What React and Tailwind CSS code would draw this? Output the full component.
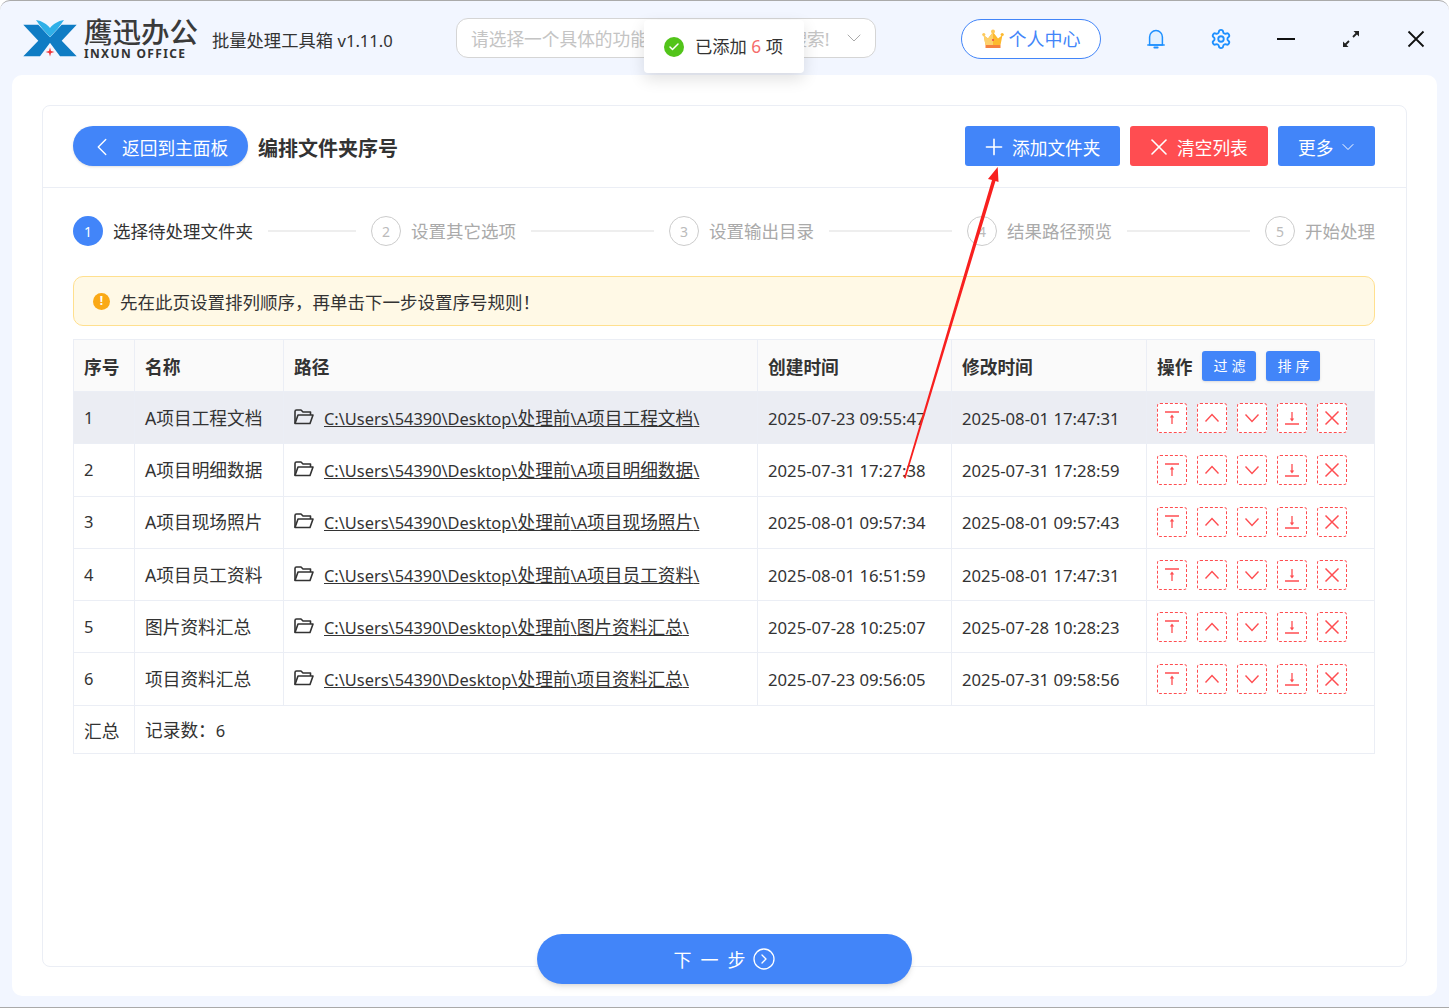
import React from 'react'
import { ChevronLeft, ChevronDown, Plus, X, Settings, CircleChevronRight, Check } from 'lucide-react'

const rows = [
  { id: 1, name: 'A项目工程文档', path: 'C:\\Users\\54390\\Desktop\\处理前\\A项目工程文档\\', created: '2025-07-23 09:55:47', modified: '2025-08-01 17:47:31' },
  { id: 2, name: 'A项目明细数据', path: 'C:\\Users\\54390\\Desktop\\处理前\\A项目明细数据\\', created: '2025-07-31 17:27:38', modified: '2025-07-31 17:28:59' },
  { id: 3, name: 'A项目现场照片', path: 'C:\\Users\\54390\\Desktop\\处理前\\A项目现场照片\\', created: '2025-08-01 09:57:34', modified: '2025-08-01 09:57:43' },
  { id: 4, name: 'A项目员工资料', path: 'C:\\Users\\54390\\Desktop\\处理前\\A项目员工资料\\', created: '2025-08-01 16:51:59', modified: '2025-08-01 17:47:31' },
  { id: 5, name: '图片资料汇总', path: 'C:\\Users\\54390\\Desktop\\处理前\\图片资料汇总\\', created: '2025-07-28 10:25:07', modified: '2025-07-28 10:28:23' },
  { id: 6, name: '项目资料汇总', path: 'C:\\Users\\54390\\Desktop\\处理前\\项目资料汇总\\', created: '2025-07-23 09:56:05', modified: '2025-07-31 09:58:56' },
]

const steps = ['选择待处理文件夹', '设置其它选项', '设置输出目录', '结果路径预览', '开始处理']

const Logo = () => (
  <svg width="54" height="38" viewBox="0 0 54 38">
    <path d="M0.3 4.7H15.3L29.3 19.7L17 36.3H0.3L15.3 20.7Z" fill="#0f7cc4" />
    <path d="M53.7 4.7H38.7L24.7 19.7L37 36.3H53.7L38.7 20.7Z" fill="#0f7cc4" />
    <path d="M13 0C19 1 24 4 27 8C30 4 35 1 41 0C37 6 32 12 27 17C22 12 17 6 13 0Z" fill="#2fb0e8" />
    <path d="M27 27.5L28 31L31.5 32L28 33L27 36.5L26 33L22.5 32L26 31Z" fill="#f0353b" />
  </svg>
)

const Crown = () => (
  <svg width="22" height="20" viewBox="0 0 22 20">
    <path d="M1.5 6L6 9.5L11 3L16 9.5L20.5 6L18.5 16H3.5Z" fill="#fdb92e" />
    <path d="M1.5 6L6 9.5L11 3V16H3.5Z" fill="#fdd06c" />
    <circle cx="1.8" cy="5.5" r="1.6" fill="#fdc95a" />
    <circle cx="11" cy="2.4" r="2" fill="#fdc95a" />
    <circle cx="20.2" cy="5.5" r="1.6" fill="#fdb92e" />
    <rect x="3.5" y="16" width="15" height="3" fill="#f5803e" />
    <circle cx="11" cy="11" r="1" fill="#e8434b" />
  </svg>
)

const Bell = () => (
  <svg width="18" height="20" viewBox="0 0 18 20" fill="#e3f1ff" stroke="#1e90ff" strokeWidth="1.5">
    <path d="M2.6 16V8C2.6 4.4 5.4 1.6 9 1.6S15.4 4.4 15.4 8V16Z" strokeLinejoin="round" />
    <path d="M0.8 16H17.2" strokeLinecap="round" />
    <path d="M7.4 18.4H10.6" strokeLinecap="round" strokeWidth="2" />
  </svg>
)

const ExpandIcon = () => (
  <svg width="18" height="18" viewBox="0 0 18 18" fill="#222" stroke="#222" strokeWidth="1.8">
    <path d="M3 15L7 11M11 7L15 3" />
    <path d="M1 17V11.5L6.5 17Z" stroke="none" />
    <path d="M17 1V6.5L11.5 1Z" stroke="none" />
  </svg>
)

const CloseIcon = () => (
  <svg width="18" height="18" viewBox="0 0 18 18" fill="none" stroke="#111" strokeWidth="1.8">
    <path d="M1.5 1.5L16.5 16.5M16.5 1.5L1.5 16.5" />
  </svg>
)

const FolderIcon = () => (
  <svg width="20" height="16" viewBox="0 0 20 16" fill="none" stroke="#333" strokeWidth="1.6" className="shrink-0 -mt-[3px]">
    <path d="M1 14.5V2.5C1 1.7 1.7 1 2.5 1H7L9 3H16.5V6" strokeLinejoin="round" />
    <path d="M1 14.5L4 6H19L16 14.5Z" strokeLinejoin="round" />
  </svg>
)

const MoveTop = () => (
  <svg width="16" height="16" viewBox="0 0 16 16" fill="none" stroke="#ff4d51" strokeWidth="1.3">
    <path d="M1 2H15M8 14V6" />
    <path d="M8 4.6L10.2 7.4H5.8Z" fill="#ff4d51" stroke="none" />
  </svg>
)

const MoveBottom = () => (
  <svg width="16" height="16" viewBox="0 0 16 16" fill="none" stroke="#ff4d51" strokeWidth="1.3">
    <path d="M1 14H15M8 2V10" />
    <path d="M8 11.4L10.2 8.6H5.8Z" fill="#ff4d51" stroke="none" />
  </svg>
)

const MoveUp = () => (
  <svg width="16" height="16" viewBox="0 0 16 16" fill="none" stroke="#ff4d51" strokeWidth="1.4">
    <path d="M1.5 11.5L8 4.5L14.5 11.5" />
  </svg>
)

const MoveDown = () => (
  <svg width="16" height="16" viewBox="0 0 16 16" fill="none" stroke="#ff4d51" strokeWidth="1.4">
    <path d="M1.5 4.5L8 11.5L14.5 4.5" />
  </svg>
)

const Remove = () => (
  <svg width="16" height="16" viewBox="0 0 16 16" fill="none" stroke="#ff4d51" strokeWidth="1.5">
    <path d="M1.5 1.5L14.5 14.5M14.5 1.5L1.5 14.5" />
  </svg>
)

const ActionButton = ({ children }) => (
  <button className="w-[30px] h-[30px] flex items-center justify-center bg-white border border-dashed border-[#ff4d51] rounded-[3px]">
    {children}
  </button>
)

// latin parts of a path run narrower than the CJK parts in the original
const PathText = ({ text }) => (
  <span className="underline whitespace-nowrap">
    {text.split(/([\u4e00-\u9fff]+)/).map((part, i) => (
      <span key={i} className={i % 2 ? 'text-[17.7px]' : 'text-[16.4px]'}>{part}</span>
    ))}
  </span>
)

const Arrow = () => (
  <svg className="absolute left-0 top-0 pointer-events-none" width="1449" height="1008" viewBox="0 0 1449 1008">
    <path d="M904 478L905.6 478.5L995.5 181L998.5 182L997.7 167L988 179L992 180Z" fill="#f8201f" />
  </svg>
)

const App = () => {
  return (
    <div className="relative w-[1449px] h-[1008px] overflow-hidden bg-white text-[#333] text-[17.7px] font-['Noto_Sans','Noto_Sans_CJK_SC',sans-serif]">
      <div className="h-full flex flex-col bg-[#f2f6ff] rounded-t-[10px] border-t border-b border-[#aaaaaa]">
        <header className="h-[74px] shrink-0 flex items-center">
          <div className="ml-[23px] w-[54px] mt-[1px]">
            <Logo />
          </div>
          <div className="ml-[7px] w-[120px] flex flex-col">
            <span className="text-[28.5px] leading-[30px] font-medium text-[#3a3a3a] whitespace-nowrap">鹰迅办公</span>
            <span className="text-[12px] leading-[13px] font-bold tracking-[1.35px] text-[#333] whitespace-nowrap">INXUN OFFICE</span>
          </div>
          <span className="ml-[8px] w-[244px] whitespace-nowrap text-[17.3px] mt-[5px]">批量处理工具箱 <span className="text-[16.6px]">v1.11.0</span></span>
          <div className="w-[420px] h-[40px] -mt-[1px] bg-white border border-[#d5d5d5] rounded-[12px] flex items-center justify-between pl-[14px] pr-[9px] text-[#c4c4c4]">
            <span className="whitespace-nowrap pt-[4px]">请选择一个具体的功能，支持输入关键字搜索!</span>
            <ChevronDown size={24} strokeWidth={1} color="#aaa" />
          </div>
          <button className="ml-[85px] mt-[1px] w-[140px] h-[40px] rounded-full bg-white border border-[#4285f9] flex items-center justify-center gap-[5px] text-[#4285f9]">
            <Crown />
            <span className="text-[18px] pt-[2px]">个人中心</span>
          </button>
          <div className="ml-[46px] mt-[1px] w-[18px]">
            <Bell />
          </div>
          <div className="ml-[45px] mt-[1px]">
            <Settings size={22} color="#1e90ff" strokeWidth={2} />
          </div>
          <div className="ml-[45px] mt-[1px] w-[18px] h-[2px] bg-[#111]" />
          <div className="ml-[47px] mt-[1px]">
            <ExpandIcon />
          </div>
          <div className="ml-[47px] mt-[1px]">
            <CloseIcon />
          </div>
        </header>

        <main className="ml-[12px] w-[1425px] h-[921px] bg-white rounded-[10px] pt-[30px] px-[30px] shrink-0">
          <div className="h-[862px] border border-[#ebeef5] rounded-[8px]">
            <div className="h-[82px] border-b border-[#ebeef5] flex items-center pl-[30px] pr-[31px] pb-[2px]">
              <button className="w-[175px] h-[40px] rounded-full bg-[#4285f9] text-white flex items-center pl-[14px] gap-[5px] shadow-sm">
                <ChevronLeft size={30} strokeWidth={1.1} className="mt-[2px]" />
                <span className="whitespace-nowrap pt-[6px]">返回到主面板</span>
              </button>
              <h1 className="ml-[10px] pt-[6px] text-[20px] font-bold text-[#333] whitespace-nowrap">编排文件夹序号</h1>
              <div className="ml-auto flex gap-[10px]">
                <button className="w-[155px] h-[40px] rounded-[3px] bg-[#4285f9] text-white flex items-center pl-[16px] gap-[5px]">
                  <Plus size={26} strokeWidth={1.5} className="mt-[2px]" />
                  <span className="pt-[6px]">添加文件夹</span>
                </button>
                <button className="w-[138px] h-[40px] rounded-[3px] bg-[#ff4d51] text-white flex items-center pl-[15px] gap-[4px]">
                  <X size={28} strokeWidth={1.4} className="mt-[2px]" />
                  <span className="pt-[6px]">清空列表</span>
                </button>
                <button className="w-[97px] h-[40px] rounded-[3px] bg-[#4285f9] text-white flex items-center pl-[20px] gap-[5px]">
                  <span className="pt-[6px]">更多</span>
                  <ChevronDown size={20} strokeWidth={1.2} className="mt-[2px]" />
                </button>
              </div>
            </div>

            <div className="pl-[30px] pr-[31px]">
              <div className="mt-[28px] flex items-center">
                {steps.map((step, i) => (
                  <div key={step} className={`flex items-center ${i < 4 ? 'w-[298px] shrink-0' : 'shrink-0'}`}>
                    {i === 0 ? (
                      <span className="w-[30px] h-[30px] rounded-full bg-[#4285f9] text-white text-[14px] flex items-center justify-center shrink-0">{i + 1}</span>
                    ) : (
                      <span className="w-[30px] h-[30px] rounded-full border border-[#cccccc] text-[#bbbbbb] text-[14px] flex items-center justify-center shrink-0">{i + 1}</span>
                    )}
                    <span className={`ml-[10px] whitespace-nowrap text-[17.5px] ${i === 0 ? 'text-[#333]' : 'text-[#aaaaaa]'}`}>{step}</span>
                    {i < 4 && <span className="flex-1 h-[2px] bg-[#eeeeee] ml-[15px] mr-[15px]" />}
                  </div>
                ))}
              </div>

              <div className="mt-[30px] h-[50px] bg-[#fff9e6] border border-[#ffe08f] rounded-[10px] flex items-center pl-[19px]">
                <span className="w-[17px] h-[17px] rounded-full bg-[#faa916] text-white text-[12px] font-bold flex items-center justify-center">!</span>
                <span className="ml-[10px] pt-[2px] text-[17.5px] whitespace-nowrap">先在此页设置排列顺序，再单击下一步设置序号规则！</span>
              </div>

              <table className="mt-[13px] w-[1301px] table-fixed border-collapse text-left">
                <thead>
                  <tr className="h-[52px] bg-[#fafafa]">
                    <th className="w-[61px] border border-[#ebeef5] pl-[10px] pt-[3px] font-bold">序号</th>
                    <th className="w-[149px] border border-[#ebeef5] pl-[10px] pt-[3px] font-bold">名称</th>
                    <th className="w-[474px] border border-[#ebeef5] pl-[10px] pt-[3px] font-bold">路径</th>
                    <th className="w-[194px] border border-[#ebeef5] pl-[10px] pt-[3px] font-bold">创建时间</th>
                    <th className="w-[195px] border border-[#ebeef5] pl-[10px] pt-[3px] font-bold">修改时间</th>
                    <th className="w-[228px] border border-[#ebeef5] pl-[10px] font-bold">
                      <div className="flex items-center gap-[10px]">
                        <span className="pt-[3px]">操作</span>
                        <span className="w-[54px] h-[30px] rounded-[3px] bg-[#4285f9] text-white text-[14px] font-normal tracking-[4px] pl-[4px] flex items-center justify-center shadow-sm">过滤</span>
                        <span className="w-[54px] h-[30px] rounded-[3px] bg-[#4285f9] text-white text-[14px] font-normal tracking-[4px] pl-[4px] flex items-center justify-center shadow-sm">排序</span>
                      </div>
                    </th>
                  </tr>
                </thead>
                <tbody>
                  {rows.map((row) => (
                    <tr key={row.id} className={`h-[52.3px] ${row.id === 1 ? 'bg-[#ebedf3]' : 'bg-white'}`}>
                      <td className="border border-[#ebeef5] pl-[10px] pt-[1px] text-[16.5px]">{row.id}</td>
                      <td className="border border-[#ebeef5] pl-[10px] pt-[1px] whitespace-nowrap">{row.name}</td>
                      <td className="border border-[#ebeef5] pl-[10px] pt-[1px]">
                        <div className="flex items-center gap-[10px]">
                          <FolderIcon />
                          <PathText text={row.path} />
                        </div>
                      </td>
                      <td className="border border-[#ebeef5] pl-[10px] pt-[1px] text-[16.7px] whitespace-nowrap">{row.created}</td>
                      <td className="border border-[#ebeef5] pl-[10px] pt-[1px] text-[16.7px] whitespace-nowrap">{row.modified}</td>
                      <td className="border border-[#ebeef5] pl-[10px]">
                        <div className="flex gap-[10px]">
                          <ActionButton><MoveTop /></ActionButton>
                          <ActionButton><MoveUp /></ActionButton>
                          <ActionButton><MoveDown /></ActionButton>
                          <ActionButton><MoveBottom /></ActionButton>
                          <ActionButton><Remove /></ActionButton>
                        </div>
                      </td>
                    </tr>
                  ))}
                  <tr className="h-[48px]">
                    <td className="border border-[#ebeef5] pl-[10px] pt-[3px]">汇总</td>
                    <td colSpan={5} className="border border-[#ebeef5] pl-[10px] pt-[3px]">记录数：<span className="text-[16.5px]">6</span></td>
                  </tr>
                </tbody>
              </table>
            </div>
          </div>
        </main>
      </div>

      {/* floating things */}
      <button className="absolute left-[537px] top-[934px] w-[375px] h-[50px] rounded-full bg-[#4285f9] text-white flex items-center justify-center shadow-md">
        <span className="tracking-[9px] text-[18px] pt-[2px]">下一步</span>
        <CircleChevronRight size={24} strokeWidth={1.3} className="-ml-[3px]" />
      </button>

      <div className="absolute left-[644px] top-[20px] w-[160px] h-[53px] bg-white rounded-[4px] shadow-[0_6px_16px_rgba(0,0,0,0.12)] flex items-center pl-[20px]">
        <span className="w-[20px] h-[20px] rounded-full bg-[#52c41a] flex items-center justify-center">
          <Check size={12} color="#fff" strokeWidth={3} />
        </span>
        <span className="ml-[11px] whitespace-nowrap text-[17.3px]">已添加 <span className="text-[#f56c6c]">6</span> 项</span>
      </div>

      <Arrow />
    </div>
  )
}

export default App
